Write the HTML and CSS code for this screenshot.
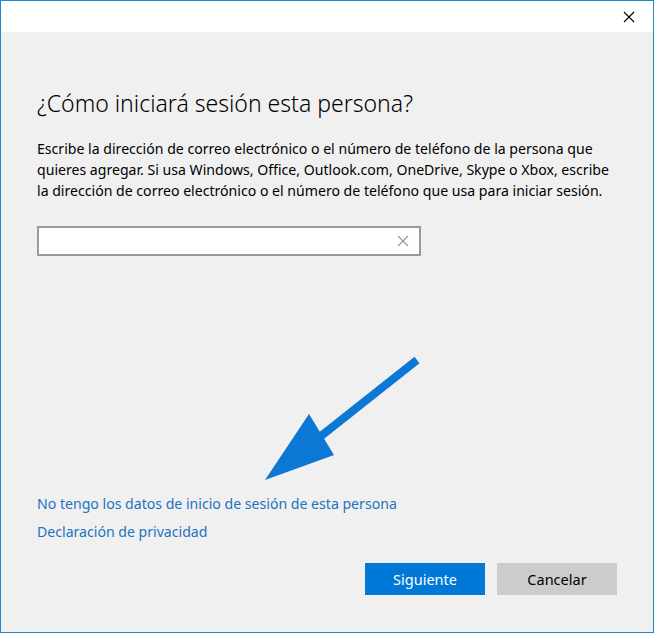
FILE: index.html
```html
<!DOCTYPE html>
<html lang="es">
<head>
<meta charset="utf-8">
<link rel="stylesheet" href="styles.css">
</head>
<body>
<div class="window">
  <div class="titlebar">
    <svg class="close" width="12" height="12" viewBox="0 0 12 12"><path d="M1 1 L11 11 M11 1 L1 11" stroke="#000" stroke-width="1.1" fill="none"/></svg>
  </div>
  <div class="content">
    <h1 class="title">¿Cómo iniciará sesión esta persona?</h1>
    <p class="desc">Escribe la dirección de correo electrónico o el número de teléfono de la persona que quieres agregar. Si usa Windows, Office, Outlook.com, OneDrive, Skype o Xbox, escribe la dirección de correo electrónico o el número de teléfono que usa para iniciar sesión.</p>
    <div class="input">
      <svg class="clear" width="12" height="12" viewBox="0 0 12 12"><path d="M1 1 L11 11 M11 1 L1 11" stroke="#8a9aa0" stroke-width="1.1" fill="none"/></svg>
    </div>
    <div class="spacer">
      <svg class="arrow" width="170" height="130" viewBox="0 0 170 130"><path d="M166 6 L70 82" stroke="#0a78d4" stroke-width="8" stroke-linecap="butt" fill="none"/><path d="M58 60 L83 101 L14 126 Z" fill="#0a78d4"/></svg>
    </div>
    <a class="link">No tengo los datos de inicio de sesión de esta persona</a>
    <a class="link">Declaración de privacidad</a>
    <div class="buttons">
      <button class="btn primary">Siguiente</button>
      <button class="btn secondary">Cancelar</button>
    </div>
  </div>
</div>
</body>
</html>
```
FILE: styles.css
```css
* { box-sizing: border-box; }
html, body { margin: 0; padding: 0; }
body { font-family: "Noto Sans", "Open Sans", sans-serif; }
.window {
  width: 654px;
  height: 633px;
  border: 1px solid #1f86c9;
  background: #f0f0f0;
  display: flex;
  flex-direction: column;
}
.titlebar {
  height: 31px;
  background: #fff;
  display: flex;
  justify-content: flex-end;
  align-items: center;
  padding-right: 18px;
}
.close { display: block; }
.content {
  flex: 1;
  display: flex;
  flex-direction: column;
  padding: 0 0 0 36px;
  position: relative;
}
.title {
  margin: 56px 0 0 0;
  font-weight: 300;
  font-size: 23px;
  line-height: 30px;
  color: #000;
}
.desc {
  margin: 20px 0 0 0;
  width: 585px;
  font-size: 14.1px;
  line-height: 21px;
  color: #000;
}
.input {
  margin-top: 25px;
  width: 384px;
  height: 30px;
  border: 2px solid #999;
  background: #fff;
  display: flex;
  justify-content: flex-end;
  align-items: center;
  padding-right: 10px;
}
.spacer {
  height: 238px;
  position: relative;
}
.arrow { position: absolute; left: 214px; top: 98px; }
.link {
  color: #1b73c2;
  font-size: 14.1px;
  line-height: 20px;
  margin-bottom: 8px;
  align-self: flex-start;
}
.buttons {
  display: flex;
  gap: 12px;
  justify-content: flex-end;
  padding-right: 36px;
  margin-top: 13px;
}
.btn {
  width: 120px;
  height: 32px;
  border: none;
  font-family: inherit;
  font-size: 14.5px;
  padding: 0;
}
.primary { background: #0078d7; color: #fff; }
.secondary { background: #cccccc; color: #000; }
```
